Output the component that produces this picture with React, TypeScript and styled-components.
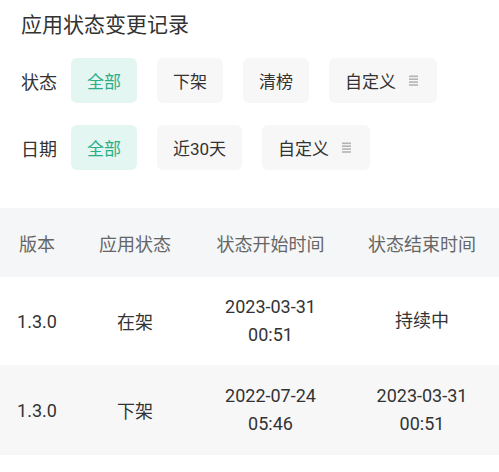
import styled, { createGlobalStyle } from "styled-components";

const GlobalStyle = createGlobalStyle`
  html, body {
    margin: 0;
    padding: 0;
    background: #fff;
  }
  body {
    font-family: Roboto, "Noto Sans CJK SC", sans-serif;
    color: #333;
  }
`;

type Chip = { label: string; active?: boolean; menu?: boolean };

const filters: { name: string; chips: Chip[] }[] = [
  {
    name: "状态",
    chips: [
      { label: "全部", active: true },
      { label: "下架" },
      { label: "清榜" },
      { label: "自定义", menu: true },
    ],
  },
  {
    name: "日期",
    chips: [
      { label: "全部", active: true },
      { label: "近30天" },
      { label: "自定义", menu: true },
    ],
  },
];

const rows = [
  { version: "1.3.0", status: "在架", start: ["2023-03-31", "00:51"], end: ["持续中"] },
  { version: "1.3.0", status: "下架", start: ["2022-07-24", "05:46"], end: ["2023-03-31", "00:51"] },
];

function MenuIcon() {
  return (
    <svg width="9" height="11" viewBox="0 0 9 11">
      <rect x="0" y="0.5" width="9" height="1.6" fill="#b4b4b4" />
      <rect x="0" y="3.4" width="9" height="1.6" fill="#b4b4b4" />
      <rect x="0" y="6.3" width="9" height="1.6" fill="#b4b4b4" />
      <rect x="0" y="9.2" width="9" height="1.6" fill="#b4b4b4" />
    </svg>
  );
}

export default function App() {
  return (
    <>
      <GlobalStyle />
      <Page>
        <Title>应用状态变更记录</Title>
        <Filters>
          {filters.map((f) => (
            <FilterRow key={f.name}>
              <FilterLabel>{f.name}</FilterLabel>
              {f.chips.map((c) => (
                <ChipButton key={c.label} $active={c.active}>
                  {c.label}
                  {c.menu && <MenuIcon />}
                </ChipButton>
              ))}
            </FilterRow>
          ))}
        </Filters>
        <Table>
          <HeaderRow>
            <Cell>版本</Cell>
            <Cell>应用状态</Cell>
            <Cell>状态开始时间</Cell>
            <Cell>状态结束时间</Cell>
          </HeaderRow>
          {rows.map((r, i) => (
            <BodyRow key={i} $striped={i % 2 === 1}>
              <Cell>{r.version}</Cell>
              <Cell>{r.status}</Cell>
              <Cell>
                {r.start.map((l) => (
                  <Line key={l}>{l}</Line>
                ))}
              </Cell>
              <Cell>
                {r.end.map((l) => (
                  <Line key={l}>{l}</Line>
                ))}
              </Cell>
            </BodyRow>
          ))}
        </Table>
      </Page>
    </>
  );
}

const Page = styled.div`
  width: 499px;
  padding-top: 10px;
`;

const Title = styled.h1`
  margin: 0;
  padding-left: 21px;
  font-size: 21px;
  font-weight: 400;
  line-height: 30px;
  color: #333;
`;

const Filters = styled.div`
  display: flex;
  flex-direction: column;
  gap: 22px;
  padding: 18px 0 0 21px;
`;

const FilterRow = styled.div`
  display: flex;
  align-items: center;
  gap: 20px;
`;

const FilterLabel = styled.span`
  width: 30px;
  font-size: 18px;
  color: #333;
  white-space: nowrap;
`;

const ChipButton = styled.div<{ $active?: boolean }>`
  display: flex;
  align-items: center;
  gap: 13px;
  height: 45px;
  padding: 0 16px;
  border-radius: 6px;
  font-size: 17px;
  background: ${({ $active }) => ($active ? "#e4f6f2" : "#f7f7f7")};
  color: ${({ $active }) => ($active ? "#2aae88" : "#333")};

  svg {
    margin-right: 3px;
  }
`;

const Table = styled.div`
  margin-top: 38px;
`;

const Grid = styled.div`
  display: grid;
  grid-template-columns: 74px 122px 149px 1fr;
  align-items: center;
`;

const HeaderRow = styled(Grid)`
  height: 69px;
  background: #f5f6f8;
  color: #666;
  font-size: 18px;
`;

const BodyRow = styled(Grid)<{ $striped?: boolean }>`
  height: ${({ $striped }) => ($striped ? "90px" : "88px")};
  background: ${({ $striped }) => ($striped ? "#f7f7f8" : "#fff")};
  color: #333;
  font-size: 18px;
`;

const Cell = styled.div`
  display: flex;
  flex-direction: column;
  align-items: center;
  text-align: center;
  white-space: nowrap;
`;

const Line = styled.span`
  line-height: 28px;
`;
